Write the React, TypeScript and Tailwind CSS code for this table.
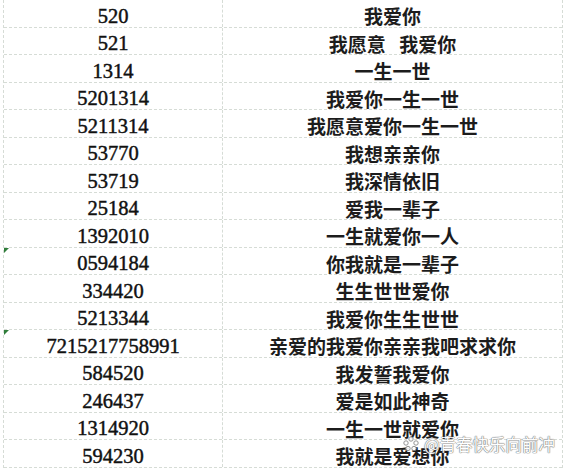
import React from 'react';

const ROWS: [string, string][] = [
  ['520', '我爱你'],
  ['521', '我愿意\u2002\u2009我爱你'],
  ['1314', '一生一世'],
  ['5201314', '我爱你一生一世'],
  ['5211314', '我愿意爱你一生一世'],
  ['53770', '我想亲亲你'],
  ['53719', '我深情依旧'],
  ['25184', '爱我一辈子'],
  ['1392010', '一生就爱你一人'],
  ['0594184', '你我就是一辈子'],
  ['334420', '生生世世爱你'],
  ['5213344', '我爱你生生世世'],
  ['7215217758991', '亲爱的我爱你亲亲我吧求求你'],
  ['584520', '我发誓我爱你'],
  ['246437', '爱是如此神奇'],
  ['1314920', '一生一世就爱你'],
  ['594230', '我就是爱想你'],
];

// rows that carry the little green excel marker
const FLAGGED = [9, 12];

const App: React.FC = () => {
  return (
    <div className="relative w-[568px] h-[470px] overflow-hidden bg-white">
      <div className="ml-[3px] w-[560px] border-l border-r border-dashed border-[#d6dcd6]">
        {ROWS.map(([code, meaning], idx) => (
          <div key={code} className="flex h-[27.5px] border-b border-dashed border-[#d6dcd6]">
            <div className="relative w-[219px] shrink-0 flex items-center justify-center pt-[5px] border-r border-dashed border-[#d6dcd6] font-['Liberation_Serif',serif] text-[20.5px] leading-none text-[#111] [-webkit-text-stroke:0.45px_#111]">
              {FLAGGED.includes(idx) && (
                <span className="absolute left-0 top-0 w-0 h-0 border-t-[5px] border-r-[5px] border-t-[#2f7d3a] border-r-transparent" />
              )}
              {code}
            </div>
            <div className="flex-1 flex items-center justify-center pt-[5px] font-['Noto_Sans_CJK_SC',sans-serif] font-bold text-[19px] leading-none text-[#1c1c1c] whitespace-pre">
              {meaning}
            </div>
          </div>
        ))}
      </div>

      {/* watermark */}
      <div className="absolute left-[402px] top-[435px] flex items-center gap-[4px] opacity-90">
        <svg width="18" height="18" viewBox="0 0 18 18" fill="none" stroke="#8a8a8a" strokeWidth="1">
          <circle cx="9" cy="4" r="2.2" fill="white" />
          <circle cx="4" cy="8" r="2.2" fill="white" />
          <circle cx="14" cy="8" r="2.2" fill="white" />
          <circle cx="6" cy="13.5" r="2.2" fill="white" />
          <circle cx="12" cy="13.5" r="2.2" fill="white" />
        </svg>
        <span className="font-['Noto_Sans_CJK_SC',sans-serif] text-[16.5px] leading-none text-white [text-shadow:0_0_1px_#6f6f6f,0_0_1px_#6f6f6f,0_0_1px_#6f6f6f]">
          @青春快乐向前冲
        </span>
      </div>
    </div>
  );
};

export default App;
